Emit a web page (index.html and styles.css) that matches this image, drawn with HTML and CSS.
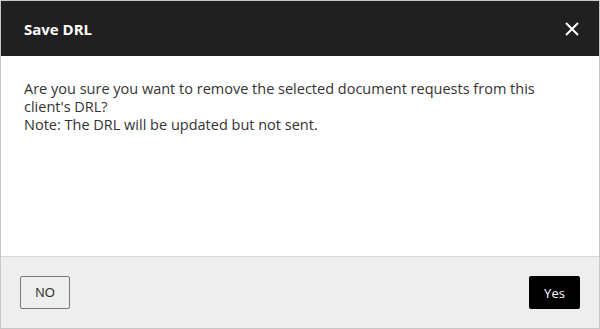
FILE: index.html
```html
<!DOCTYPE html>
<html lang="en">
<head>
  <meta charset="UTF-8" />
  <title>Save DRL</title>
  <link rel="stylesheet" href="styles.css">
</head>
<body>
  <div class="modal">
    <div class="modal-header">
      <h2>Save DRL</h2>
      <button class="close" aria-label="Close">
        <svg width="14" height="14" viewBox="0 0 14 14">
          <path d="M1 1 L13 13 M13 1 L1 13" stroke="#fff" stroke-width="2" fill="none"/>
        </svg>
      </button>
    </div>
    <div class="modal-body">
      <p>Are you sure you want to remove the selected document requests from this client's DRL?<br>
      Note: The DRL will be updated but not sent.</p>
    </div>
    <div class="modal-footer">
      <button class="btn btn-no">NO</button>
      <button class="btn btn-yes">Yes</button>
    </div>
  </div>
</body>
</html>
```

FILE: styles.css
```css
body {
  margin: 0;
  font-family: 'Open Sans', sans-serif;
  background: #fff;
}

.modal {
  width: 600px;
  height: 329px;
  box-sizing: border-box;
  border: 1px solid #c8c8c8;
  display: flex;
  flex-direction: column;
}

.modal-header {
  height: 55px;
  background: #202020;
  display: flex;
  align-items: center;
  justify-content: space-between;
  padding: 0 20px 0 23px;
}

.modal-header h2 {
  margin: 0;
  color: #fff;
  font-size: 15px;
  font-weight: 700;
}

.close {
  background: none;
  border: none;
  padding: 0;
  width: 14px;
  height: 14px;
  display: flex;
  cursor: pointer;
}

.modal-body {
  flex: 1;
  padding: 24px 50px 24px 23px;
}

.modal-body p {
  margin: 0;
  font-size: 14.5px;
  line-height: 18px;
  color: #333;
}

.modal-footer {
  height: 71px;
  background: #eeeeee;
  border-top: 1px solid #d6d6d6;
  display: flex;
  align-items: center;
  justify-content: space-between;
  padding: 0 19px;
}

.btn {
  height: 33px;
  border-radius: 2px;
  font-size: 13px;
  cursor: pointer;
}

.btn-no {
  width: 50px;
  background: #eeeeee;
  border: 1px solid #777;
  color: #333;
  font-family: 'Liberation Sans', Arial, sans-serif;
}

.btn-yes {
  width: 51px;
  background: #000;
  border: none;
  color: #fff;
  font-family: 'Open Sans', sans-serif;
}
```
